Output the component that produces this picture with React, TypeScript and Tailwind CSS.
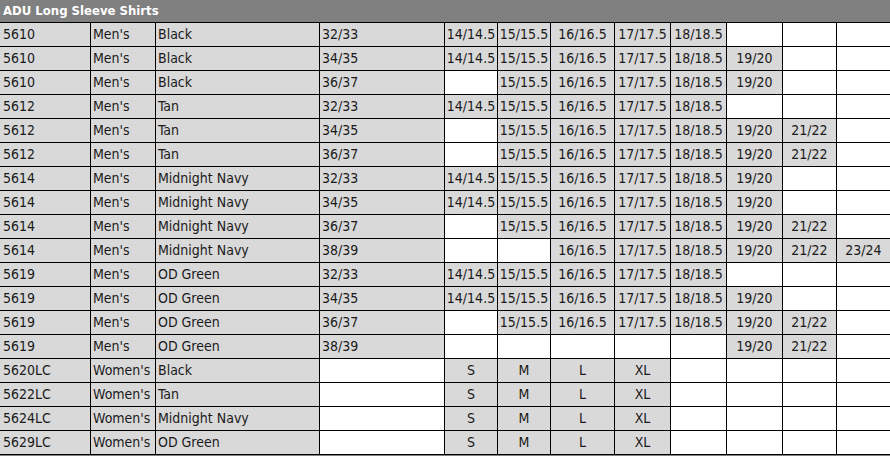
import React from "react";

type Row = [string, string, string, string, (string | null)[]];

const FULL = ["14/14.5", "15/15.5", "16/16.5", "17/17.5", "18/18.5"];

const rows: Row[] = [
  ["5610", "Men's", "Black", "32/33", [...FULL, null, null, null]],
  ["5610", "Men's", "Black", "34/35", [...FULL, "19/20", null, null]],
  ["5610", "Men's", "Black", "36/37", [null, ...FULL.slice(1), "19/20", null, null]],
  ["5612", "Men's", "Tan", "32/33", [...FULL, null, null, null]],
  ["5612", "Men's", "Tan", "34/35", [null, ...FULL.slice(1), "19/20", "21/22", null]],
  ["5612", "Men's", "Tan", "36/37", [null, ...FULL.slice(1), "19/20", "21/22", null]],
  ["5614", "Men's", "Midnight Navy", "32/33", [...FULL, "19/20", null, null]],
  ["5614", "Men's", "Midnight Navy", "34/35", [...FULL, "19/20", null, null]],
  ["5614", "Men's", "Midnight Navy", "36/37", [null, ...FULL.slice(1), "19/20", "21/22", null]],
  ["5614", "Men's", "Midnight Navy", "38/39", [null, null, ...FULL.slice(2), "19/20", "21/22", "23/24"]],
  ["5619", "Men's", "OD Green", "32/33", [...FULL, null, null, null]],
  ["5619", "Men's", "OD Green", "34/35", [...FULL, "19/20", null, null]],
  ["5619", "Men's", "OD Green", "36/37", [null, ...FULL.slice(1), "19/20", "21/22", null]],
  ["5619", "Men's", "OD Green", "38/39", [null, null, null, null, null, "19/20", "21/22", null]],
  ["5620LC", "Women's", "Black", "", ["S", "M", "L", "XL", null, null, null, null]],
  ["5622LC", "Women's", "Tan", "", ["S", "M", "L", "XL", null, null, null, null]],
  ["5624LC", "Women's", "Midnight Navy", "", ["S", "M", "L", "XL", null, null, null, null]],
  ["5629LC", "Women's", "OD Green", "", ["S", "M", "L", "XL", null, null, null, null]],
];

const font = { fontFamily: "'DejaVu Sans Condensed', 'DejaVu Sans', sans-serif" };

export default function App() {
  return (
    <div className="w-[890px] h-[456px] bg-[#808080] overflow-hidden" style={font}>
      <div className="h-[22px] bg-[#808080] text-white font-bold text-[13px] leading-[22px] pl-[3px]">
        ADU Long Sleeve Shirts
      </div>
      <div className="grid grid-cols-[90px_64px_163px_124px_52px_52px_63px_55px_55px_55px_53px_53px] auto-rows-[23px] gap-px bg-black py-px text-[14px] text-[#1a1a1a]">
        {rows.map((r, i) => (
          <React.Fragment key={i}>
            <div className="bg-[#d9d9d9] pl-[3px] leading-[23px] whitespace-nowrap">{r[0]}</div>
            <div className="bg-[#d9d9d9] pl-[2px] leading-[23px] whitespace-nowrap">{r[1]}</div>
            <div className="bg-[#d9d9d9] pl-[2px] leading-[23px] whitespace-nowrap">{r[2]}</div>
            <div className={`${r[3] ? "bg-[#d9d9d9]" : "bg-white"} pl-[2px] leading-[23px] whitespace-nowrap`}>{r[3]}</div>
            {r[4].map((s, j) => (
              <div
                key={j}
                className={`${s ? "bg-[#d9d9d9]" : "bg-white"} text-center leading-[23px] whitespace-nowrap overflow-hidden`}
              >
                {s}
              </div>
            ))}
          </React.Fragment>
        ))}
      </div>
    </div>
  );
}
